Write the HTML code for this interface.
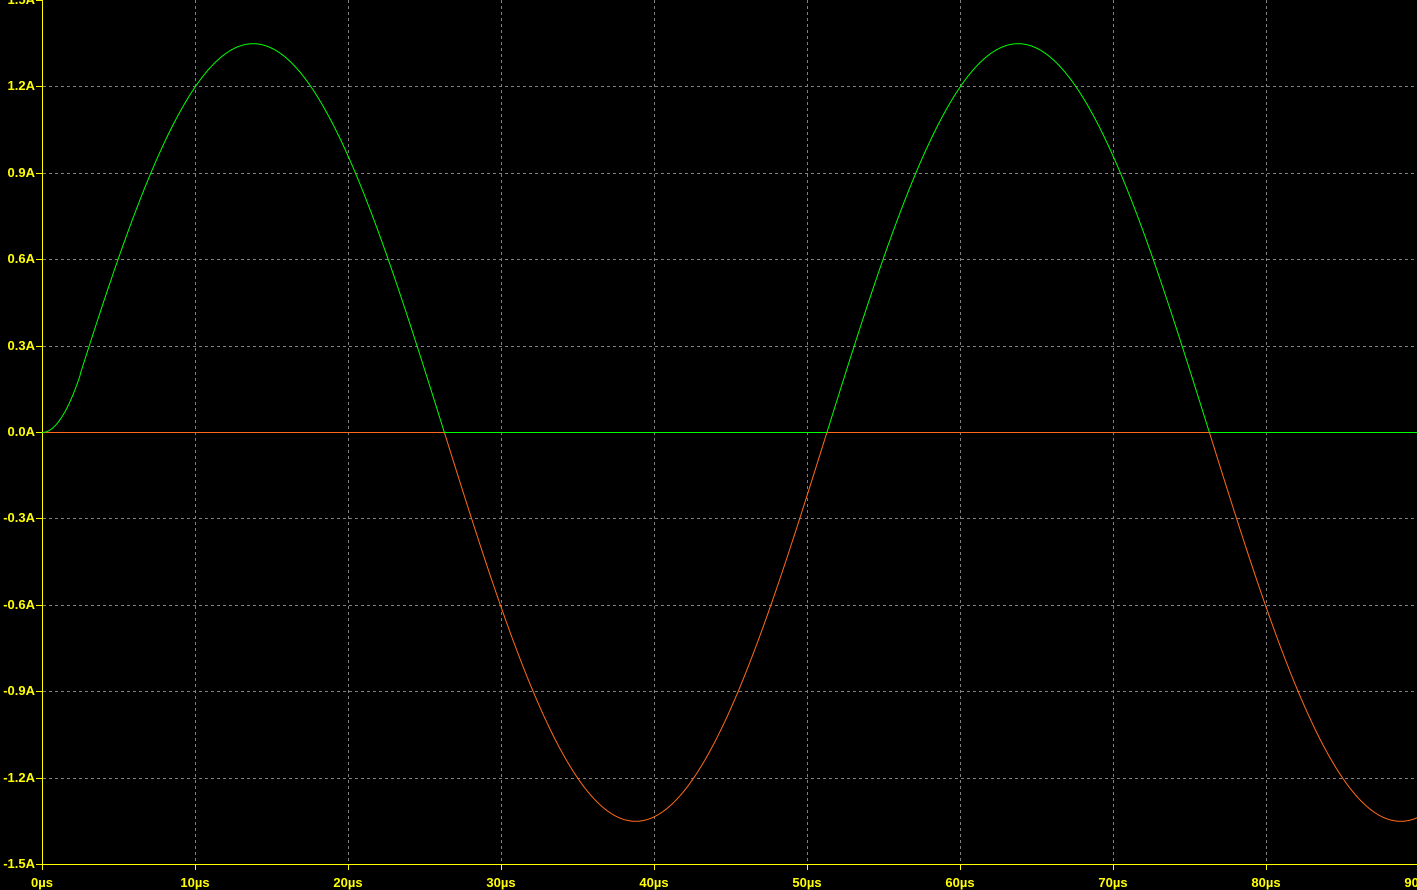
<!DOCTYPE html>
<html><head><meta charset="utf-8"><style>
html,body{margin:0;padding:0;background:#000;width:1417px;height:890px;overflow:hidden}
svg{display:block}
text{font-family:"Liberation Sans",sans-serif;font-size:13px;font-weight:bold;fill:#ffff00}
</style></head><body>
<svg id="s" width="1417" height="890" xmlns="http://www.w3.org/2000/svg">
<g id="grid" stroke="#808080" stroke-width="1" stroke-dasharray="3,3" shape-rendering="crispEdges"></g>
<g id="lab"></g>
<line x1="42.5" y1="0" x2="42.5" y2="864" stroke="#ffff00" shape-rendering="crispEdges"/>
<line x1="36" y1="864.5" x2="1417" y2="864.5" stroke="#ffff00" shape-rendering="crispEdges"/>
<polyline id="red" fill="none" stroke="#ff6a1a" stroke-width="1"/>
<polyline id="green" fill="none" stroke="#00ff00" stroke-width="1"/>
</svg>
<script>
var X0=42,PX=15.3,Y0=432,PY=288;
var g=document.getElementById('grid'),l=document.getElementById('lab'),ns="http://www.w3.org/2000/svg";
function el(p,n,a){var e=document.createElementNS(ns,n);for(var k in a)e.setAttribute(k,a[k]);p.appendChild(e);return e;}
var ylabels=["1.5A","1.2A","0.9A","0.6A","0.3A","0.0A","-0.3A","-0.6A","-0.9A","-1.2A","-1.5A"];
for(var i=0;i<11;i++){var y=Math.round(i*86.4);
 if(i>0&&i<10)el(g,'line',{x1:43,y1:y+.5,x2:1417,y2:y+.5});
 el(l,'line',{x1:36,y1:y+.5,x2:42,y2:y+.5,stroke:'#ffff00'});
 var t=el(l,'text',{x:35,y:y+4,'text-anchor':'end'});t.textContent=ylabels[i];}
for(var j=0;j<=9;j++){var x=Math.round(X0+j*153);
 if(j>0)el(g,'line',{x1:x+.5,y1:0,x2:x+.5,y2:864});
 el(l,'line',{x1:x+.5,y1:864,x2:x+.5,y2:870,stroke:'#ffff00'});
 var t=el(l,'text',{x:x,y:887,'text-anchor':'middle'});t.textContent=(j*10)+'µs';}
function I(t){if(t<2.5)return 0.2*Math.pow(t/2.5,2);return 1.35*Math.sin(2*Math.PI*(t-1.3)/50);}
var gp=[],rp=[];
for(var px=42;px<=1417;px+=0.5){var t=(px-X0)/PX,v=I(t);
 var gv=Math.max(v,0),rv=Math.min(v,0);
 gp.push(px+','+(Y0-gv*PY+.5).toFixed(1));rp.push(px+','+(Y0-rv*PY+.5).toFixed(1));}
document.getElementById('green').setAttribute('points',gp.join(' '));
document.getElementById('red').setAttribute('points',rp.join(' '));
</script>
</body></html>
